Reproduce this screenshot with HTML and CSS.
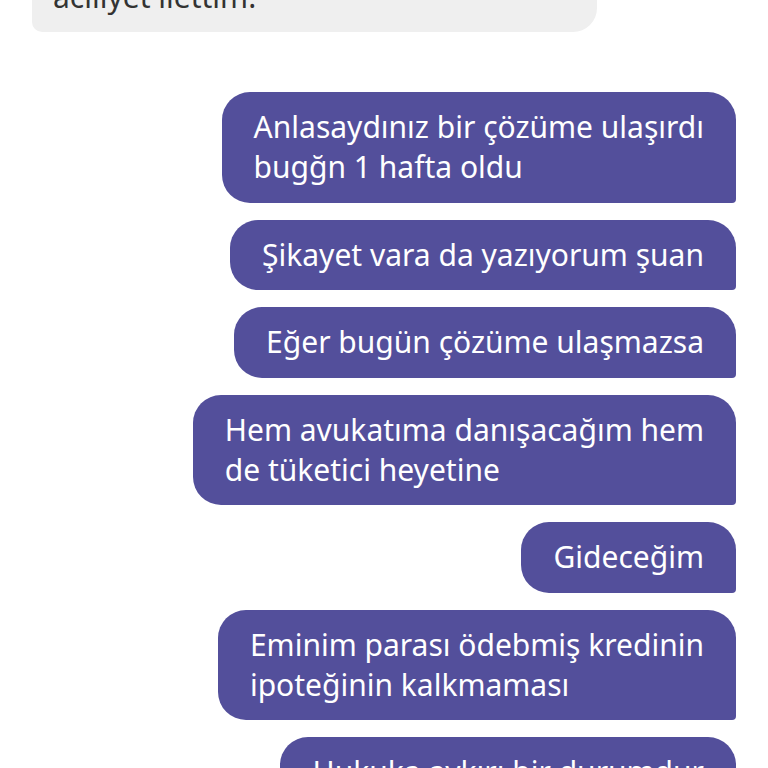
FILE: index.html
```html
<!DOCTYPE html>
<html lang="tr">
<head>
<meta charset="utf-8">
<link rel="stylesheet" href="styles.css">
</head>
<body>
<div class="chat">
  <div class="msg in">aciliyet ilettim.</div>
  <div class="msg out first">Anlasaydınız bir çözüme ulaşırdı<br>bugğn 1 hafta oldu</div>
  <div class="msg out">Şikayet vara da yazıyorum şuan</div>
  <div class="msg out">Eğer bugün çözüme ulaşmazsa</div>
  <div class="msg out">Hem avukatıma danışacağım hem<br>de tüketici heyetine</div>
  <div class="msg out">Gideceğim</div>
  <div class="msg out">Eminim parası ödebmiş kredinin<br>ipoteğinin kalkmaması</div>
  <div class="msg out">Hukuka aykırı bir durumdur</div>
</div>
</body>
</html>
```
FILE: styles.css
```css
html, body {
  margin: 0;
  padding: 0;
  background: #ffffff;
  overflow: hidden;
  height: 768px;
}
.chat {
  display: flex;
  flex-direction: column;
  align-items: flex-end;
  gap: 17px;
  padding: 0 32px;
  margin-top: -38px;
  font-family: "Noto Sans", "Open Sans", sans-serif;
}
.msg {
  font-size: 30px;
  line-height: 40px;
  white-space: nowrap;
}
.in {
  align-self: flex-start;
  width: 565px;
  box-sizing: border-box;
  background: #efefef;
  color: #333333;
  padding: 15px 21px 15px;
  border-radius: 24px 24px 24px 10px;
}
.out {
  background: #534f9b;
  color: #ffffff;
  padding: 15px 32px 15.5px;
  border-radius: 28px 28px 4px 28px;
}
.first {
  margin-top: 43px;
}
```
